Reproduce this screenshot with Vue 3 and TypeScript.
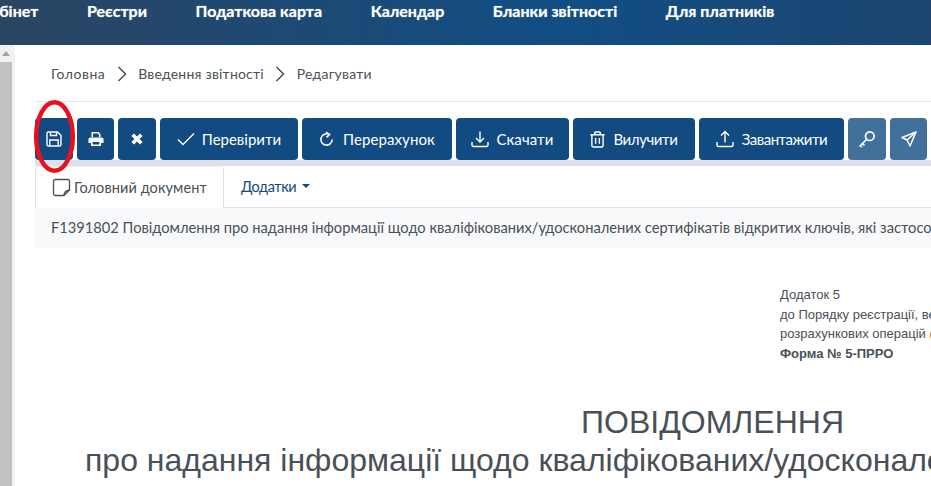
<script setup lang="ts">
const nav: string[] = ['Кабінет', 'Реєстри', 'Податкова карта', 'Календар', 'Бланки звітності', 'Для платників']
</script>

<template>
  <div class="page">
    <header class="top">
      <nav class="nav">
        <a v-for="n in nav" :key="n">{{ n }}</a>
      </nav>
    </header>
    <div class="body">
      <aside class="scroll">
        <div class="arrow"></div>
        <div class="thumb"></div>
      </aside>
      <main class="main">
        <div class="crumbs">
          <span class="first">Головна</span>
          <svg class="chev" viewBox="0 0 10 16" width="10" height="16"><path d="M1.500 1 L8.500 8 L1.500 15" /></svg>
          <span>Введення звітності</span>
          <svg class="chev" viewBox="0 0 10 16" width="10" height="16"><path d="M1.500 1 L8.500 8 L1.500 15" /></svg>
          <span>Редагувати</span>
        </div>
        <div class="tools">
          <button class="btn sq s1">
            <svg viewBox="0 0 16 16" width="16" height="16" fill="none" stroke="#fff" stroke-width="1.400"><path d="M1 2.500a1.500 1.500 0 0 1 1.500-1.500h9l3.500 3.500v9a1.500 1.500 0 0 1-1.500 1.500h-11a1.500 1.500 0 0 1-1.500-1.500z"/><path d="M4.500 1v3.500h6V1M3.800 15V9h8.400v6"/></svg>
          </button>
          <button class="btn sq s2">
            <svg viewBox="0 0 16 16" width="16" height="16" fill="#fff"><path d="M3.500 1h7l2 2v3h-1.600V3.600L9.800 2.600H5V6H3.500z"/><path d="M2 6.500h12a1.500 1.500 0 0 1 1.500 1.500v4H13v3H3v-3H.5V8A1.500 1.500 0 0 1 2 6.500zM4.600 11v2.600h6.800V11z"/></svg>
          </button>
          <button class="btn sq s3">
            <svg viewBox="0 0 12 12" width="12" height="12"><path d="M3 .4 6 3.400 9 .4 11.600 3 8.600 6l3 3L9 11.600l-3-3-3 3L.4 9l3-3-3-3z" fill="#fff"/></svg>
          </button>
          <button class="btn w1">
            <svg viewBox="0 0 18 14" width="18" height="14" fill="none" stroke="#fff" stroke-width="1.400"><path d="M1 7.500 6 12.500 17 1.500"/></svg>
            Перевірити
          </button>
          <button class="btn w2">
            <svg viewBox="0 0 16 16" width="15" height="16" fill="none" stroke="#fff" stroke-width="1.700"><path d="M11 3.300A6 6 0 1 0 14 8.500"/><path d="M7.500 .6 11.200 3.300 8 6.200"/></svg>
            Перерахунок
          </button>
          <button class="btn w3">
            <svg viewBox="0 0 18 18" width="18" height="18" fill="none" stroke="#fff" stroke-width="1.400"><path d="M9 1.500v10M5 8l4 4 4-4"/><path d="M1 12v3a1.500 1.500 0 0 0 1.500 1.500h13A1.500 1.500 0 0 0 17 15v-3"/></svg>
            Скачати
          </button>
          <button class="btn w4">
            <svg viewBox="0 0 16 18" width="15" height="17" fill="none" stroke="#fff" stroke-width="1.500"><path d="M.5 4h15M5 4V2a1 1 0 0 1 1-1h4a1 1 0 0 1 1 1v2M2 4v11.500A1.500 1.500 0 0 0 3.500 17h9a1.500 1.500 0 0 0 1.500-1.500V4"/><path d="M6 7.500v6M10 7.500v6"/></svg>
            Вилучити
          </button>
          <button class="btn w5">
            <svg viewBox="0 0 18 18" width="18" height="18" fill="none" stroke="#fff" stroke-width="1.400"><path d="M9 12.500V1.500M5 5.500l4-4 4 4"/><path d="M1 12v3a1.500 1.500 0 0 0 1.500 1.500h13A1.500 1.500 0 0 0 17 15v-3"/></svg>
            Завантажити
          </button>
          <button class="btn sq s4 light">
            <svg viewBox="0 0 18 18" width="18" height="18" fill="none" stroke="#fff" stroke-width="1.700"><circle cx="11.800" cy="6.200" r="4.300"/><path d="M8.500 9.500 1.500 16.500M4.500 13.500l2 2M2.500 15.500l1.500 1.500"/></svg>
          </button>
          <button class="btn sq s5 light">
            <svg viewBox="0 0 16 16" width="16" height="16" fill="none" stroke="#fff" stroke-width="1.500" stroke-linejoin="round"><path d="M15 1 1 6.500l5 2.500 3 6z"/><path d="M15 1 6 9"/></svg>
          </button>
        </div>
        <div class="strip"></div>
        <div class="tabs">
          <div class="tab active">
            <svg viewBox="0 0 19 19" width="19" height="19" fill="none" stroke="#4a4f57" stroke-width="1.300"><path d="M17.500 12V3a1.500 1.500 0 0 0-1.500-1.500H3A1.500 1.500 0 0 0 1.500 3v13A1.500 1.500 0 0 0 3 17.500h9z"/><path d="M12 17.500c0-3 1-5 5.500-5.500" /></svg>
            <span>Головний документ</span>
          </div>
          <div class="tab second">
            <span class="link">Додатки</span>
            <i class="caret"></i>
          </div>
        </div>
        <div class="info">F1391802 Повідомлення про надання інформації щодо кваліфікованих/удосконалених сертифікатів відкритих ключів, які застосо</div>
        <div class="doc">
          <div class="side">
            <p>Додаток 5</p>
            <p>до Порядку реєстрації, ве</p>
            <p>розрахункових операцій (</p>
            <p><b>Форма № 5-ПРРО</b></p>
          </div>
          <h1>ПОВІДОМЛЕННЯ</h1>
          <h2>про надання інформації щодо кваліфікованих/удосконале</h2>
        </div>
      </main>
    </div>
    <svg class="ring" width="46" height="80" viewBox="0 0 46 80"><ellipse cx="22.500" cy="39.500" rx="18.300" ry="34.300" fill="none" stroke="#e8101f" stroke-width="4.500"/></svg>
  </div>
</template>

<style>
html, body { margin: 0; background: #fff; overflow: hidden; }
</style>

<style scoped>
.page { position: relative; width: 931px; height: 486px; overflow: hidden; font-family: Lato, "Noto Sans", sans-serif; color: #495057; background: #fff; }
.top { height: 45px; background: linear-gradient(90deg, #2b4562 0%, #114e84 60%, #1d4570 100%); overflow: hidden; }
.nav { display: flex; gap: 48.500px; margin-left: -20px; padding-top: 1px; white-space: nowrap; }
.nav a { color: #fff; font-weight: 700; font-size: 16px; line-height: 19px; letter-spacing: 0; text-shadow: 0 0 1px rgba(255, 255, 255, .6); }
.body { display: flex; height: 441px; }
.scroll { width: 15px; flex: none; background: #f1f1f1; }
.arrow { height: 17px; position: relative; }
.arrow::after { content: ""; position: absolute; left: 2px; top: 6px; border: 4px solid transparent; border-top: 0; border-bottom: 5px solid #a3a3a3; }
.thumb { height: 424px; width: 12px; background: #c1c1c1; }
.main { width: 916px; flex: none; padding-left: 20px; box-sizing: border-box; }
.crumbs { display: flex; align-items: center; gap: 11.500px; height: 55px; padding-left: 16px; border-bottom: 1px solid #e3e5e8; font-size: 14px; letter-spacing: .2px; padding-top: 1px; }
.first { letter-spacing: .5px; }
.chev { fill: none; stroke: #495057; stroke-width: 1.500; }
.tools { display: flex; gap: 4px; padding-top: 16px; }
.btn { height: 42px; border: 0; border-radius: 4px; background: #114b81; color: #fff; font: inherit; font-size: 15px; display: flex; align-items: center; justify-content: center; gap: 7px; padding: 0; flex: none; letter-spacing: 0; }
.light { background: #41709a; }
.s1 { width: 38px; }
.s2 { width: 37px; }
.s3 { width: 38px; }
.s4 { width: 38px; }
.s5 { width: 37px; }
.w1 { width: 138px; }
.w2 { width: 150px; gap: 9px; letter-spacing: .1px; }
.w3 { width: 113px; letter-spacing: .1px; }
.w4 { width: 122px; gap: 8px; letter-spacing: -.4px; }
.w5 { width: 145px; gap: 8px; letter-spacing: -.5px; }
.strip { height: 6px; background: #dee2e6; width: 100%; }
.tabs { display: flex; height: 42px; border-bottom: 1px solid #dee2e6; box-sizing: border-box; }
.tab { display: flex; align-items: center; box-sizing: border-box; font-size: 14.500px; gap: 3px; padding: 0 16px; white-space: nowrap; }
.tab.active { width: 189px; border: 1px solid #dee2e6; border-bottom: 0; border-top-color: #eceef0; border-radius: 4px 4px 0 0; background: #fff; height: 42px; letter-spacing: .1px; }
.second { padding-left: 17px; gap: 6px; }
.link { color: #114b81; letter-spacing: -.4px; }
.caret { border: 4px solid transparent; border-bottom: 0; border-top-color: #114b81; margin-top: -1px; }
.info { background: #f8f9fa; height: 40px; line-height: 40px; padding-left: 16px; font-size: 14.680px; white-space: nowrap; overflow: hidden; }
.doc { white-space: nowrap; font-family: "Liberation Sans", Arial, sans-serif; overflow: hidden; }
.side { margin-left: 745px; padding-top: 37px; font-size: 13px; line-height: 19.500px; }
.side p { margin: 0; }
.side b { font-weight: 700; }
h1 { margin: 0; padding-top: 40px; padding-left: 546px; font-size: 32px; line-height: 38px; font-weight: 400; }
h2 { margin: 0; padding-left: 50px; font-size: 32px; line-height: 38px; font-weight: 400; }
.ring { position: absolute; left: 32px; top: 97px; }
</style>
